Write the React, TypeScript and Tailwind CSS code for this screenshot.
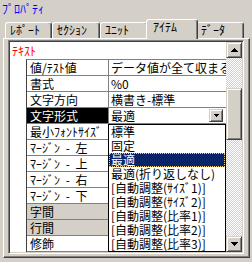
import React from "react";

function TriUp() {
  return (
    <svg width="7" height="4" shapeRendering="crispEdges" className="block">
      <rect x="3" y="0" width="1" height="1" fill="#000" />
      <rect x="2" y="1" width="3" height="1" fill="#000" />
      <rect x="1" y="2" width="5" height="1" fill="#000" />
      <rect x="0" y="3" width="7" height="1" fill="#000" />
    </svg>
  );
}

function TriDown() {
  return (
    <svg width="7" height="4" shapeRendering="crispEdges" className="block">
      <rect x="0" y="0" width="7" height="1" fill="#000" />
      <rect x="1" y="1" width="5" height="1" fill="#000" />
      <rect x="2" y="2" width="3" height="1" fill="#000" />
      <rect x="3" y="3" width="1" height="1" fill="#000" />
    </svg>
  );
}

function TriDownSmall() {
  return (
    <svg width="5" height="3" shapeRendering="crispEdges" className="block">
      <rect x="0" y="0" width="5" height="1" fill="#000" />
      <rect x="1" y="1" width="3" height="1" fill="#000" />
      <rect x="2" y="2" width="1" height="1" fill="#000" />
    </svg>
  );
}

function Btn({ children, className }: { children?: React.ReactNode; className: string }) {
  return (
    <div
      className={
        "flex items-center justify-center bg-[#d4d0c8] border border-t-[#d4d0c8] border-l-[#d4d0c8] border-r-[#404040] border-b-[#404040] shadow-[inset_1px_1px_0_#ffffff,inset_-1px_-1px_0_#808080] " +
        className
      }
    >
      {children}
    </div>
  );
}

function Tab({ label, first }: { label: string; first?: boolean }) {
  return (
    <div
      className={
        "h-[16px] border-l border-t border-white border-r border-r-[#404040] rounded-t-[3px] shadow-[inset_-1px_0_0_#808080] pl-[4px] pt-[1px] whitespace-nowrap " +
        (first ? "w-[47px]" : "w-[48px]")
      }
    >
      {label}
    </div>
  );
}

function SelTab({ label }: { label: string }) {
  return (
    <div className="relative z-10 h-[20px] w-[52px] -mx-[2px] -mb-[1px] bg-[#d4d0c8] border-l border-t border-white border-r border-r-[#404040] rounded-t-[3px] shadow-[inset_-1px_0_0_#808080] pl-[6px] pt-[1px] whitespace-nowrap">
      {label}
    </div>
  );
}

type Row = { label: string; value?: string; gray?: boolean; selected?: boolean };

const rows: Row[] = [
  { label: "値/ﾃｽﾄ値", value: "データ値が全て収まる" },
  { label: "書式", value: "%0" },
  { label: "文字方向", value: "横書き-標準" },
  { label: "文字形式", selected: true },
  { label: "最小ﾌｫﾝﾄｻｲｽﾞ" },
  { label: "ﾏｰｼﾞﾝ - 左" },
  { label: "ﾏｰｼﾞﾝ - 上" },
  { label: "ﾏｰｼﾞﾝ - 右" },
  { label: "ﾏｰｼﾞﾝ - 下" },
  { label: "字間", gray: true },
  { label: "行間", gray: true },
  { label: "修飾" },
];

const items = [
  "標準",
  "固定",
  "最適",
  "最適(折り返しなし)",
  "[自動調整(ｻｲｽﾞ1)]",
  "[自動調整(ｻｲｽﾞ2)]",
  "[自動調整(比率1)]",
  "[自動調整(比率2)]",
  "[自動調整(比率3)]",
];

export default function App() {
  return (
    <div className="w-[252px] h-[262px] bg-[#d4d0c8] overflow-hidden font-['Noto_Sans_CJK_JP',sans-serif] text-[12px] leading-[12px] text-black">
      <div className="h-[19px] pl-[2px] pt-[3px] text-[#0000ff]">ﾌﾟﾛﾊﾟﾃｨ</div>
      <div className="relative z-10 flex items-end h-[19px] pl-[5px]">
        <Tab label="ﾚﾎﾟｰﾄ" first />
        <Tab label="ｾｸｼｮﾝ" />
        <Tab label="ﾕﾆｯﾄ" />
        <SelTab label="ｱｲﾃﾑ" />
        <Tab label="ﾃﾞｰﾀ" />
      </div>
      <div className="ml-[3px] w-[247px] h-[220px] border-t border-l border-white border-r border-b border-r-[#404040] border-b-[#404040] shadow-[inset_-1px_-1px_0_#808080] pt-[1px] pl-[4px]">
        <div className="w-[236px] h-[214px] border border-t-[#808080] border-l-[#808080] border-r-white border-b-white shadow-[inset_1px_1px_0_#404040,inset_-1px_-1px_0_#d4d0c8] p-[1px] flex">
          <div className="relative w-[216px] h-full bg-white overflow-hidden">
            <div className="h-[17px] pl-[2px] pt-[3px] text-[#ff0000]">ﾃｷｽﾄ</div>
            <div className="ml-[16px] border-t border-l border-t-[#808080] border-l-[#404040]">
              {rows.map((r) => (
                <div key={r.label} className="flex h-[16px] border-b border-[#808080]">
                  <div
                    className={
                      "w-[81px] pl-[3px] flex items-center overflow-hidden whitespace-nowrap [word-spacing:3px] " +
                      (r.selected ? "bg-black text-white" : r.gray ? "bg-[#d4d0c8]" : "")
                    }
                  >
                    {r.label}
                  </div>
                  <div className="flex-1 border-l border-[#808080] flex items-center overflow-hidden whitespace-nowrap">
                    {r.selected ? (
                      <div className="flex-1 flex items-center justify-between pl-[2px]">
                        <span>最適</span>
                        <Btn className="w-[14px] h-[13px] mr-[3px]">
                          <TriDownSmall />
                        </Btn>
                      </div>
                    ) : (
                      <span className="pl-[2px]">{r.value}</span>
                    )}
                  </div>
                </div>
              ))}
            </div>
            <div className="absolute left-[98px] top-[82px] w-[118px] h-[128px] border border-black bg-white">
              {items.map((it) => (
                <div
                  key={it}
                  className={
                    "h-[14px] pl-[2px] leading-[14px] whitespace-nowrap " +
                    (it === "最適"
                      ? "bg-[#0a246a] text-white outline-1 outline-dotted outline-[#f0d080] -outline-offset-1"
                      : "")
                  }
                >
                  {it}
                </div>
              ))}
            </div>
          </div>
          <div className="w-[16px] h-full flex flex-col">
            <Btn className="w-[16px] h-[16px]">
              <TriUp />
            </Btn>
            <div className="flex-1 bg-[image:repeating-conic-gradient(#d4d0c8_0_25%,#ffffff_0_50%)] bg-[length:2px_2px]">
              <Btn className="mt-[30px] w-[16px] h-[52px]" />
            </div>
            <Btn className="w-[16px] h-[16px]">
              <TriDown />
            </Btn>
          </div>
        </div>
      </div>
    </div>
  );
}
